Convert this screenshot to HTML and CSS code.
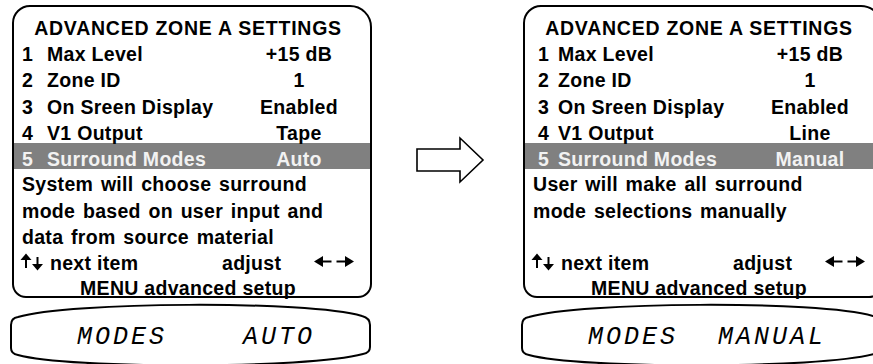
FILE: index.html
```html
<!DOCTYPE html>
<html>
<head>
<meta charset="utf-8">
<link rel="stylesheet" href="styles.css">
</head>
<body>
<div class="scene">
  <div class="col">
    <div class="osd">
      <div class="title">ADVANCED ZONE A SETTINGS</div>
      <div class="row"><span class="num">1</span><span class="label">Max Level</span><span class="val">+15 dB</span></div>
      <div class="row"><span class="num">2</span><span class="label">Zone ID</span><span class="val">1</span></div>
      <div class="row"><span class="num">3</span><span class="label">On Sreen Display</span><span class="val">Enabled</span></div>
      <div class="row"><span class="num">4</span><span class="label">V1 Output</span><span class="val">Tape</span></div>
      <div class="row sel"><span class="num">5</span><span class="label">Surround Modes</span><span class="val">Auto</span></div>
      <div class="desc">
        <div>System will choose surround</div>
        <div>mode based on user input and</div>
        <div>data from source material</div>
      </div>
      <div class="nav">
        <svg class="ud" width="24" height="20" viewBox="0 0 24 20"><path d="M6 5 V15" stroke="#000" stroke-width="2"/><path d="M0.5 7 L6 0.5 L11.5 7 Z" fill="#000"/><path d="M17.5 4 V13" stroke="#000" stroke-width="2"/><path d="M12 11 L17.5 17.5 L23 11 Z" fill="#000"/></svg>
        <span class="next">next item</span>
        <span class="adj">adjust</span>
        <svg class="lr" width="40" height="20" viewBox="0 0 40 20"><path d="M8 8.5 H17.5" stroke="#000" stroke-width="2"/><path d="M0 8.5 L9 3 L9 14 Z" fill="#000"/><path d="M22.5 8.5 H32" stroke="#000" stroke-width="2"/><path d="M31 3 L40 8.5 L31 14 Z" fill="#000"/></svg>
      </div>
      <div class="menu">MENU advanced setup</div>
    </div>
    <div class="lcd">
      <svg class="lcd-shape" width="364" height="62" viewBox="0 0 364 62"><path d="M3 22 Q3 15 10 14 C60 -1 300 -3 354 13 Q362 15 362 22 L362 44 Q362 50 355 51 C300 66 60 66 10 52 Q3 51 3 45 Z" fill="#fff" stroke="#000" stroke-width="2"/></svg>
      <span class="seg">MODES</span>
      <span class="seg">AUTO</span>
    </div>
  </div>
  <div class="mid">
    <svg class="bigarrow" width="70" height="48" viewBox="0 0 70 48"><path d="M2 13 H45 V2 L68 24 L45 46 V35 H2 Z" fill="#fff" stroke="#000" stroke-width="1.6" stroke-linejoin="miter"/></svg>
  </div>
  <div class="col">
    <div class="osd osd-r">
      <div class="title">ADVANCED ZONE A SETTINGS</div>
      <div class="row"><span class="num">1</span><span class="label">Max Level</span><span class="val">+15 dB</span></div>
      <div class="row"><span class="num">2</span><span class="label">Zone ID</span><span class="val">1</span></div>
      <div class="row"><span class="num">3</span><span class="label">On Sreen Display</span><span class="val">Enabled</span></div>
      <div class="row"><span class="num">4</span><span class="label">V1 Output</span><span class="val">Line</span></div>
      <div class="row sel"><span class="num">5</span><span class="label">Surround Modes</span><span class="val">Manual</span></div>
      <div class="desc">
        <div>User will make all surround</div>
        <div>mode selections manually</div>
        <div>&nbsp;</div>
      </div>
      <div class="nav">
        <svg class="ud" width="24" height="20" viewBox="0 0 24 20"><path d="M6 5 V15" stroke="#000" stroke-width="2"/><path d="M0.5 7 L6 0.5 L11.5 7 Z" fill="#000"/><path d="M17.5 4 V13" stroke="#000" stroke-width="2"/><path d="M12 11 L17.5 17.5 L23 11 Z" fill="#000"/></svg>
        <span class="next">next item</span>
        <span class="adj">adjust</span>
        <svg class="lr" width="40" height="20" viewBox="0 0 40 20"><path d="M8 8.5 H17.5" stroke="#000" stroke-width="2"/><path d="M0 8.5 L9 3 L9 14 Z" fill="#000"/><path d="M22.5 8.5 H32" stroke="#000" stroke-width="2"/><path d="M31 3 L40 8.5 L31 14 Z" fill="#000"/></svg>
      </div>
      <div class="menu">MENU advanced setup</div>
    </div>
    <div class="lcd">
      <svg class="lcd-shape" width="364" height="62" viewBox="0 0 364 62"><path d="M3 22 Q3 15 10 14 C60 -1 300 -3 354 13 Q362 15 362 22 L362 44 Q362 50 355 51 C300 66 60 66 10 52 Q3 51 3 45 Z" fill="#fff" stroke="#000" stroke-width="2"/></svg>
      <span class="seg">MODES</span>
      <span class="seg">MANUAL</span>
    </div>
  </div>
</div>
</body>
</html>
```
FILE: styles.css
```css
html, body {
  margin: 0;
  padding: 0;
  background: #fff;
}
body {
  width: 873px;
  height: 364px;
  overflow: hidden;
  font-family: "Liberation Sans", Arial, sans-serif;
  font-weight: bold;
  font-size: 19.5px;
  color: #000;
}
.scene {
  display: flex;
  padding: 5px 0 0 12px;
}
.col {
  width: 360px;
  flex: none;
  display: flex;
  flex-direction: column;
}
.osd {
  box-sizing: border-box;
  width: 360px;
  height: 293px;
  border: 2px solid #000;
  border-radius: 18px 22px 14px 14px;
  padding: 8px 16px 0 8px;
  letter-spacing: 0.3px;
}
.title {
  line-height: 26px;
  text-align: center;
  letter-spacing: 0.75px;
  white-space: nowrap;
}
.row {
  display: flex;
  line-height: 26.3px;
  white-space: nowrap;
}
.num {
  width: 25px;
  flex: none;
}
.osd-r .num {
  width: 20px;
  padding-left: 5px;
}
.label {
  flex: 1;
}
.val {
  width: 110px;
  flex: none;
  text-align: center;
}
.sel {
  box-sizing: border-box;
  height: 26px;
  margin: -3px -16px 0 -8px;
  padding: 3px 16px 0 8px;
  background: #808080;
  color: #f2f2f2;
}
.desc {
  padding-top: 2px;
  line-height: 26.6px;
  word-spacing: 2px;
  white-space: nowrap;
}
.nav {
  display: flex;
  align-items: center;
  height: 25px;
  line-height: 25px;
}
.ud {
  margin-left: -2px;
  flex: none;
}
.next {
  margin-left: 6px;
  width: 172px;
  flex: none;
}
.lr {
  margin-left: auto;
  flex: none;
}
.menu {
  line-height: 25px;
  text-align: center;
  white-space: nowrap;
}
.mid {
  width: 151px;
  flex: none;
}
.bigarrow {
  display: block;
  margin: 131px 0 0 43px;
}
.lcd {
  position: relative;
  box-sizing: border-box;
  width: 364px;
  height: 62px;
  margin: 5px 0 0 -4px;
  display: flex;
  justify-content: space-between;
  align-items: flex-start;
  padding: 25px 60px 0 69px;
}
.lcd-shape {
  position: absolute;
  left: 0;
  top: 0;
}
.seg {
  position: relative;
  font-family: "Liberation Mono", monospace;
  font-style: italic;
  font-weight: normal;
  font-size: 25px;
  line-height: 20px;
  letter-spacing: 3px;
  margin-right: -3px;
}
```
